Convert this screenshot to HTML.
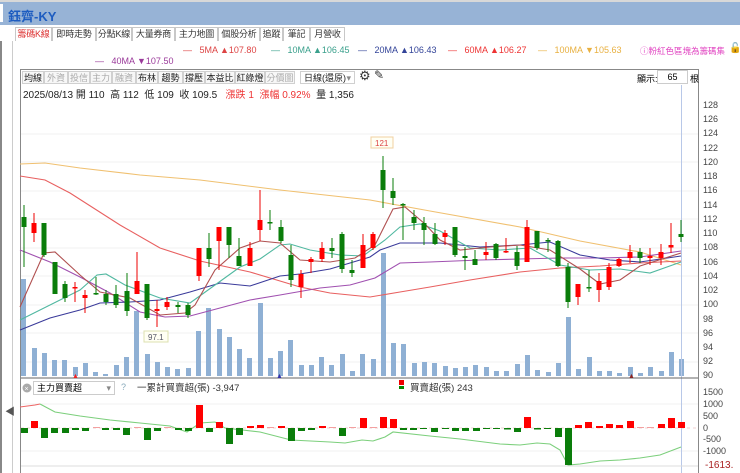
<!DOCTYPE html>
<html><head><meta charset="utf-8"><style>
*{margin:0;padding:0;box-sizing:border-box}
body{width:740px;height:473px;overflow:hidden;background:#fff;font-family:"Liberation Sans","Noto Sans CJK TC",sans-serif;position:relative}
.a{position:absolute;white-space:nowrap}
.tb{position:absolute;top:0;left:0;width:740px;height:25px;background:#97b3d6;border-top:2px solid #d8d8d8}
.tab{position:absolute;top:27px;height:14px;border:1px solid #c8c8c8;border-bottom:none;font-size:9px;line-height:13px;color:#333;text-align:center;background:#fff;white-space:nowrap;overflow:hidden;letter-spacing:-0.2px}
.btn{position:absolute;top:71px;height:13px;font-size:9px;line-height:12px;color:#222;border:1px solid #d0d0d0;text-align:center;background:#f7f7f7;white-space:nowrap;overflow:hidden}
.g{color:#aaa}
.ma{font-size:9px;top:45px}
.ax{position:absolute;left:703px;font-size:9px;color:#444}
</style></head><body>
<div class="tb"></div>
<div class="a" style="left:0;top:4px;width:3px;height:18px;background:#fff"></div>
<div class="a" style="left:8px;top:6px;font-size:13px;font-weight:bold;color:#1d5cc0">鈺齊-KY</div>
<div class="tab" style="left:15px;width:37px;color:#d33">籌碼K線</div>
<div class="tab" style="left:52px;width:44px">即時走勢</div>
<div class="tab" style="left:96px;width:36px">分點K線</div>
<div class="tab" style="left:132px;width:43px">大量券商</div>
<div class="tab" style="left:175px;width:43px">主力地圖</div>
<div class="tab" style="left:218px;width:42px">個股分析</div>
<div class="tab" style="left:260px;width:23px">追蹤</div>
<div class="tab" style="left:283px;width:27px">筆記</div>
<div class="tab" style="left:310px;width:35px">月營收</div>
<div class="a" style="left:12px;top:41px;width:1px;height:432px;background:#ccc"></div>
<div class="a" style="left:0;top:41px;width:2px;height:432px;background:#888"></div>
<div class="a" style="left:5px;top:403px;font-size:10px;color:#555">◀</div>

<div class="a ma" style="left:183px;color:#d44">—&nbsp;&nbsp; 5MA ▲107.80</div>
<div class="a ma" style="left:271px;color:#3aa08c">—&nbsp;&nbsp; 10MA ▲106.45</div>
<div class="a ma" style="left:358px;color:#334499">—&nbsp;&nbsp; 20MA ▲106.43</div>
<div class="a ma" style="left:448px;color:#e33">—&nbsp;&nbsp; 60MA ▲106.27</div>
<div class="a ma" style="left:538px;color:#e8b040">—&nbsp;&nbsp; 100MA <span style="color:#e8b040">▼</span>105.63</div>
<div class="a ma" style="left:640px;color:#e040c0;font-size:8.5px">ⓘ粉紅色區塊為籌碼集</div>
<div class="a" style="left:729px;top:43px;font-size:10px">🔓</div>
<div class="a ma" style="left:95px;top:56px;color:#9a3a9a">—&nbsp;&nbsp; 40MA ▼107.50</div>

<div class="a" style="left:20px;top:69px;width:679px;height:404px;border:1px solid #888;border-bottom:none"></div>
<div class="btn" style="left:22px;width:22px">均線</div>
<div class="btn g" style="left:44px;width:24px">外資</div>
<div class="btn g" style="left:68px;width:22px">投信</div>
<div class="btn g" style="left:90px;width:22px">主力</div>
<div class="btn g" style="left:112px;width:24px">融資</div>
<div class="btn" style="left:136px;width:22px">布林</div>
<div class="btn" style="left:158px;width:25px">趨勢</div>
<div class="btn" style="left:183px;width:22px">撐壓</div>
<div class="btn" style="left:205px;width:30px">本益比</div>
<div class="btn" style="left:235px;width:30px">紅綠燈</div>
<div class="btn g" style="left:265px;width:30px">分價圖</div>
<div class="btn" style="left:300px;width:55px;text-align:left;padding-left:3px;background:#fff">日線(還原)<span style="position:absolute;right:3px;color:#888">▾</span></div>
<div class="a" style="left:359px;top:68px;font-size:13px;color:#333">⚙</div>
<div class="a" style="left:374px;top:68px;font-size:12px;color:#333">✎</div>
<div class="a" style="left:637px;top:72px;font-size:9px">顯示:</div>
<div class="a" style="left:657px;top:70px;width:31px;height:14px;border:1px solid #ccc;font-size:9px;text-align:center;line-height:12px">65</div>
<div class="a" style="left:690px;top:72px;font-size:9px">根</div>
<div class="a" style="left:23px;top:86px;font-size:10px;color:#222">2025/08/13 開 110&nbsp; 高 112&nbsp; 低 109&nbsp; 收 109.5 &nbsp;&nbsp;<span style="color:#e33">漲跌 1&nbsp; 漲幅 0.92%</span>&nbsp; 量 1,356</div>

<svg class="a" style="left:0;top:0" width="740" height="473" viewBox="0 0 740 473">
<g stroke="#f2f2f2" stroke-width="1">
<line x1="21" y1="134" x2="698" y2="134"/><line x1="21" y1="162" x2="698" y2="162"/><line x1="21" y1="191" x2="698" y2="191"/><line x1="21" y1="219" x2="698" y2="219"/><line x1="21" y1="248" x2="698" y2="248"/><line x1="21" y1="276" x2="698" y2="276"/><line x1="21" y1="305" x2="698" y2="305"/><line x1="21" y1="333" x2="698" y2="333"/><line x1="21" y1="362" x2="698" y2="362"/>
<line x1="21" y1="404" x2="698" y2="404"/><line x1="21" y1="451" x2="698" y2="451"/>
</g>
<g fill="#8fb0d4">
<rect x="21" y="279" width="5" height="97"/><rect x="32" y="348" width="5" height="28"/><rect x="42" y="353" width="5" height="23"/><rect x="52" y="360" width="5" height="16"/><rect x="62" y="360" width="5" height="16"/><rect x="73" y="367" width="5" height="9"/><rect x="83" y="363" width="5" height="13"/><rect x="93" y="372" width="5" height="4"/><rect x="103" y="374" width="5" height="2"/><rect x="114" y="365" width="5" height="11"/><rect x="124" y="357" width="5" height="19"/><rect x="134" y="311" width="5" height="65"/><rect x="145" y="354" width="5" height="22"/><rect x="155" y="362" width="5" height="14"/><rect x="165" y="367" width="5" height="9"/><rect x="175" y="369" width="5" height="7"/><rect x="186" y="368" width="5" height="8"/><rect x="196" y="331" width="5" height="45"/><rect x="206" y="308" width="5" height="68"/><rect x="217" y="329" width="5" height="47"/><rect x="227" y="337" width="5" height="39"/><rect x="237" y="349" width="5" height="27"/><rect x="247" y="358" width="5" height="18"/><rect x="258" y="303" width="5" height="73"/><rect x="268" y="358" width="5" height="18"/><rect x="278" y="351" width="5" height="25"/><rect x="288" y="340" width="5" height="36"/><rect x="299" y="365" width="5" height="11"/><rect x="309" y="365" width="5" height="11"/><rect x="319" y="357" width="5" height="19"/><rect x="329" y="365" width="5" height="11"/><rect x="340" y="354" width="5" height="22"/><rect x="350" y="371" width="5" height="5"/><rect x="360" y="354" width="5" height="22"/><rect x="371" y="359" width="5" height="17"/><rect x="381" y="253" width="5" height="123"/><rect x="391" y="343" width="5" height="33"/><rect x="401" y="344" width="5" height="32"/><rect x="412" y="363" width="5" height="13"/><rect x="422" y="362" width="5" height="14"/><rect x="432" y="363" width="5" height="13"/><rect x="443" y="366" width="5" height="10"/><rect x="453" y="368" width="5" height="8"/><rect x="463" y="367" width="5" height="9"/><rect x="473" y="365" width="5" height="11"/><rect x="484" y="367" width="5" height="9"/><rect x="494" y="371" width="5" height="5"/><rect x="504" y="371" width="5" height="5"/><rect x="515" y="364" width="5" height="12"/><rect x="525" y="355" width="5" height="21"/><rect x="535" y="370" width="5" height="6"/><rect x="546" y="372" width="5" height="4"/><rect x="556" y="363" width="5" height="13"/><rect x="566" y="317" width="5" height="59"/><rect x="576" y="369" width="5" height="7"/><rect x="587" y="357" width="5" height="19"/><rect x="597" y="371" width="5" height="5"/><rect x="607" y="371" width="5" height="5"/><rect x="617" y="373" width="5" height="3"/><rect x="628" y="367" width="5" height="9"/><rect x="638" y="373" width="5" height="3"/><rect x="648" y="367" width="5" height="9"/><rect x="659" y="371" width="5" height="5"/><rect x="669" y="352" width="5" height="24"/><rect x="679" y="359" width="5" height="17"/>
</g>
<line x1="681.5" y1="85" x2="681.5" y2="473" stroke="#b8c8e8" stroke-width="1"/>
<g fill="none" stroke-width="1.1">
<polyline stroke="#f0c070" points="20,164 45,163 80,168 140,175 200,180 280,190 370,200 430,211 520,227 580,241 640,252 681,265"/>
<polyline stroke="#e86060" points="20,176 45,180 70,193 120,225 160,248 200,261 250,272 300,287 330,293 370,297 400,292 430,287 470,280 520,272 560,268 600,266 640,263 681,261"/>
<polyline stroke="#a050b0" points="20,250 50,262 80,277 110,293 140,312 165,317 190,316 220,308 250,300 280,295 320,288 350,285 375,278 400,263 430,262 480,260 520,259 560,258 600,258 640,257 681,251"/>
<polyline stroke="#3a3a9a" points="20,330 50,318 80,310 100,303 130,302 160,300 190,292 220,283 250,286 280,276 300,274 330,269 350,263 370,257 380,250 400,243 440,243 480,247 520,245 550,242 580,255 610,260 640,262 681,256"/>
<polyline stroke="#50b8a0" points="20,320 50,305 80,290 97,275 106,274 125,285 160,298 190,303 215,285 240,267 260,259 280,245 290,244 310,250 340,255 363,256 385,240 400,227 420,224 440,231 470,248 500,250 530,248 560,265 590,270 620,269 650,273 681,262"/>
<polyline stroke="#b05050" points="20,307 44,253 55,252 80,275 100,292 130,298 160,315 185,313 195,305 215,270 240,248 260,241 280,243 300,260 330,262 355,258 375,245 393,209 405,207 425,224 440,240 460,250 490,247 520,245 550,250 580,269 600,284 620,280 640,266 681,253"/>
</g>
<g stroke-width="1">
<g stroke="#0a7d0a">
<line x1="24" y1="205" x2="24" y2="267"/><line x1="44" y1="223" x2="44" y2="257"/><line x1="55" y1="262" x2="55" y2="294"/><line x1="65" y1="281" x2="65" y2="302"/><line x1="96" y1="277" x2="96" y2="295"/><line x1="106" y1="290" x2="106" y2="305"/><line x1="116" y1="285" x2="116" y2="308"/><line x1="127" y1="273" x2="127" y2="316"/><line x1="147" y1="284" x2="147" y2="320"/><line x1="178" y1="302" x2="178" y2="313"/><line x1="188" y1="303" x2="188" y2="318"/><line x1="209" y1="233" x2="209" y2="267"/><line x1="229" y1="227" x2="229" y2="258"/><line x1="239" y1="238" x2="239" y2="266"/><line x1="270" y1="210" x2="270" y2="230"/><line x1="281" y1="220" x2="281" y2="243"/><line x1="291" y1="245" x2="291" y2="287"/><line x1="332" y1="238" x2="332" y2="258"/><line x1="342" y1="232" x2="342" y2="273"/><line x1="352" y1="260" x2="352" y2="277"/>
<line x1="383" y1="156" x2="383" y2="208"/><line x1="393" y1="178" x2="393" y2="205"/><line x1="403" y1="203" x2="403" y2="240"/><line x1="414" y1="210" x2="414" y2="230"/><line x1="424" y1="217" x2="424" y2="245"/><line x1="435" y1="223" x2="435" y2="245"/><line x1="455" y1="227" x2="455" y2="257"/><line x1="465" y1="247" x2="465" y2="270"/><line x1="475" y1="250" x2="475" y2="265"/><line x1="496" y1="243" x2="496" y2="260"/><line x1="517" y1="246" x2="517" y2="270"/><line x1="537" y1="231" x2="537" y2="250"/><line x1="548" y1="238" x2="548" y2="252"/><line x1="558" y1="240" x2="558" y2="267"/><line x1="568" y1="263" x2="568" y2="308"/><line x1="589" y1="270" x2="589" y2="292"/><line x1="640" y1="248" x2="640" y2="263"/><line x1="681" y1="220" x2="681" y2="242"/>
</g>
<g stroke="#e00">
<line x1="34" y1="213" x2="34" y2="242"/><line x1="75" y1="282" x2="75" y2="302"/><line x1="85" y1="290" x2="85" y2="313"/><line x1="137" y1="252" x2="137" y2="294"/><line x1="157" y1="300" x2="157" y2="327"/><line x1="167" y1="297" x2="167" y2="310"/><line x1="199" y1="248" x2="199" y2="281"/><line x1="219" y1="227" x2="219" y2="270"/><line x1="250" y1="242" x2="250" y2="266"/><line x1="260" y1="190" x2="260" y2="241"/><line x1="301" y1="270" x2="301" y2="298"/><line x1="311" y1="257" x2="311" y2="273"/><line x1="322" y1="242" x2="322" y2="262"/><line x1="363" y1="234" x2="363" y2="268"/>
<line x1="373" y1="232" x2="373" y2="250"/><line x1="445" y1="230" x2="445" y2="245"/><line x1="486" y1="242" x2="486" y2="260"/><line x1="506" y1="238" x2="506" y2="253"/><line x1="527" y1="220" x2="527" y2="262"/><line x1="578" y1="284" x2="578" y2="305"/><line x1="599" y1="273" x2="599" y2="302"/><line x1="609" y1="263" x2="609" y2="290"/><line x1="619" y1="258" x2="619" y2="267"/><line x1="630" y1="245" x2="630" y2="263"/><line x1="650" y1="248" x2="650" y2="265"/><line x1="661" y1="244" x2="661" y2="265"/><line x1="671" y1="223" x2="671" y2="253"/>
</g>
<g fill="#0a7d0a">
<rect x="21.5" y="217" width="5" height="10"/><rect x="41.5" y="223" width="5" height="32"/><rect x="52.5" y="262" width="5" height="32"/><rect x="62.5" y="284" width="5" height="14"/><rect x="93.5" y="293" width="5" height="1.5"/><rect x="103.5" y="294" width="5" height="8"/><rect x="113.5" y="294" width="5" height="11"/><rect x="124.5" y="291" width="5" height="20"/><rect x="144.5" y="284" width="5" height="34"/><rect x="175.5" y="305" width="5" height="2"/><rect x="185.5" y="305" width="5" height="10"/><rect x="206.5" y="248" width="5" height="11"/><rect x="226.5" y="227" width="5" height="18"/><rect x="236.5" y="256" width="5" height="10"/><rect x="267.5" y="222" width="5" height="1.5"/><rect x="278.5" y="227" width="5" height="14"/><rect x="288.5" y="255" width="5" height="25"/><rect x="329.5" y="248" width="5" height="3"/><rect x="339.5" y="234" width="5" height="35"/><rect x="349.5" y="270" width="5" height="3"/>
<rect x="380.5" y="170" width="5" height="20"/><rect x="390.5" y="191" width="5" height="7"/><rect x="400.5" y="204" width="5" height="1.5"/><rect x="411.5" y="217" width="5" height="6"/><rect x="421.5" y="223" width="5" height="7"/><rect x="432.5" y="234" width="5" height="10"/><rect x="452.5" y="227" width="5" height="28"/><rect x="462.5" y="256" width="5" height="2"/><rect x="472.5" y="259" width="5" height="6"/><rect x="493.5" y="244" width="5" height="14"/><rect x="514.5" y="252" width="5" height="14"/><rect x="534.5" y="231" width="5" height="17"/><rect x="545.5" y="240" width="5" height="1.5"/><rect x="555.5" y="241" width="5" height="25"/><rect x="565.5" y="267" width="5" height="35"/><rect x="586.5" y="287" width="5" height="1.5"/><rect x="637.5" y="252" width="5" height="6"/><rect x="678.5" y="234" width="5" height="3"/>
</g>
<g fill="#f00">
<rect x="31.5" y="223" width="5" height="10"/><rect x="72.5" y="287" width="5" height="1.5"/><rect x="82.5" y="295" width="5" height="3"/><rect x="134.5" y="281" width="5" height="13"/><rect x="154.5" y="309" width="5" height="2"/><rect x="164.5" y="302" width="5" height="5"/><rect x="196.5" y="248" width="5" height="28"/><rect x="216.5" y="227" width="5" height="14"/><rect x="247.5" y="248" width="5" height="18"/><rect x="257.5" y="220" width="5" height="10"/><rect x="298.5" y="274" width="5" height="13"/><rect x="308.5" y="259" width="5" height="3"/><rect x="319.5" y="248" width="5" height="11"/><rect x="360.5" y="245" width="5" height="23"/>
<rect x="370.5" y="234" width="5" height="14"/><rect x="442.5" y="233" width="5" height="4"/><rect x="483.5" y="252" width="5" height="3"/><rect x="503.5" y="251" width="5" height="1.5"/><rect x="524.5" y="227" width="5" height="35"/><rect x="575.5" y="284" width="5" height="13"/><rect x="596.5" y="281" width="5" height="9"/><rect x="606.5" y="267" width="5" height="20"/><rect x="616.5" y="259" width="5" height="7"/><rect x="627.5" y="252" width="5" height="6"/><rect x="647.5" y="256" width="5" height="2"/><rect x="658.5" y="252" width="5" height="6"/><rect x="668.5" y="245" width="5" height="2.5"/>
</g>
</g>
<g font-size="8" font-family="Liberation Sans,sans-serif">
<rect x="144" y="331" width="24" height="11" fill="#fffff4" stroke="#dde0b0"/><text x="148" y="340" fill="#556">97.1</text>
<rect x="371" y="137" width="22" height="11" fill="#fffff4" stroke="#f0d0a0"/><text x="375" y="146" fill="#d44">121</text>
</g>
<line x1="21" y1="378" x2="698" y2="378" stroke="#666"/>
<g fill="#e22"><text x="72" y="378" font-size="7">▲</text><text x="276" y="378" font-size="7" fill="#33a">▲</text><text x="628" y="378" font-size="7" fill="#822">▲</text></g>
<line x1="21" y1="428" x2="698" y2="428" stroke="#f0d0d0" stroke-dasharray="3,3"/>
<polyline fill="none" stroke="#e66" stroke-width="1.1" points="20,407 35,405 40,404"/>
<polyline fill="none" stroke="#7ccf7c" stroke-width="1.1" points="40,404 55,412 80,416 110,420 140,423 170,426 187,432 200,423 215,422 225,428 260,432 291,440 330,442 345,443 362,440 373,441 385,437 393,432 430,436 460,439 500,444 520,445 537,443 550,444 560,450 568,465 580,464 600,461 620,460 640,458 660,455 681,447"/>
<g fill="#0a7d0a">
<rect x="21" y="428" width="7" height="5"/><rect x="41" y="428" width="7" height="10"/><rect x="51" y="428" width="7" height="5"/><rect x="62" y="428" width="7" height="5"/><rect x="72" y="428" width="7" height="2"/><rect x="82" y="428" width="7" height="3"/><rect x="102" y="428" width="7" height="2"/><rect x="113" y="428" width="7" height="2"/><rect x="123" y="428" width="7" height="7"/><rect x="144" y="428" width="7" height="12"/><rect x="154" y="428" width="7" height="3"/><rect x="175" y="428" width="7" height="2"/><rect x="185" y="428" width="7" height="3"/><rect x="206" y="428" width="7" height="4"/><rect x="226" y="428" width="7" height="16"/><rect x="236" y="428" width="7" height="7"/><rect x="288" y="428" width="7" height="13"/><rect x="298" y="428" width="7" height="3"/><rect x="308" y="428" width="7" height="2"/><rect x="339" y="428" width="7" height="8"/>
<rect x="400" y="428" width="7" height="2"/><rect x="410" y="428" width="7" height="2"/><rect x="420" y="428" width="7" height="1"/><rect x="431" y="428" width="7" height="4"/><rect x="442" y="428" width="7" height="1"/><rect x="452" y="428" width="7" height="3"/><rect x="462" y="428" width="7" height="3"/><rect x="473" y="428" width="7" height="3"/><rect x="483" y="428" width="7" height="1"/><rect x="493" y="428" width="7" height="1"/><rect x="504" y="428" width="7" height="1.5"/><rect x="514" y="428" width="7" height="4"/><rect x="534" y="428" width="7" height="1.5"/><rect x="544" y="428" width="7" height="1"/><rect x="555" y="428" width="7" height="9"/><rect x="565" y="428" width="7" height="37"/>
</g>
<g fill="#f00">
<rect x="31" y="421" width="7" height="7"/><rect x="196" y="405" width="7" height="23"/><rect x="216" y="422" width="7" height="6"/><rect x="247" y="426" width="7" height="2"/><rect x="257" y="425" width="7" height="3"/><rect x="278" y="426" width="7" height="2"/><rect x="319" y="426" width="7" height="2"/><rect x="360" y="418" width="7" height="10"/><rect x="380" y="417" width="7" height="11"/><rect x="390" y="419" width="7" height="9"/><rect x="524" y="417" width="7" height="11"/><rect x="575" y="425" width="7" height="3"/><rect x="585" y="422" width="7" height="6"/><rect x="596" y="426" width="7" height="2"/><rect x="606" y="424" width="7" height="4"/><rect x="616" y="425" width="7" height="3"/><rect x="627" y="421" width="7" height="7"/><rect x="658" y="424" width="7" height="4"/><rect x="668" y="418" width="7" height="10"/><rect x="678" y="422" width="7" height="6"/>
</g>
<g fill="#f3a0a0"><rect x="93" y="427" width="7" height="1"/><rect x="134" y="427" width="7" height="1"/><rect x="164" y="427" width="7" height="1"/><rect x="267" y="427" width="7" height="1"/><rect x="329" y="427" width="7" height="1"/><rect x="349" y="427" width="7" height="1"/><rect x="370" y="427" width="7" height="1"/><rect x="637" y="427" width="7" height="1"/><rect x="647" y="427" width="7" height="1"/></g>
<line x1="21" y1="466" x2="698" y2="466" stroke="#ddd"/>
<circle cx="27" cy="388" r="4.5" fill="#aaa"/><text x="24.5" y="391" font-size="7" fill="#fff">×</text>
</svg>
<div class="a" style="left:33px;top:381px;width:82px;height:14px;border:1px solid #ccc;font-size:9px;line-height:12px;padding-left:3px;background:#fff">主力買賣超<span style="position:absolute;right:3px;color:#888">▾</span></div>
<div class="a" style="left:121px;top:382px;font-size:9px;color:#8ab">?</div>
<div class="a" style="left:137px;top:380px;font-size:9.5px;color:#333">一累計買賣超(張) -3,947</div>
<div class="a" style="left:399px;top:380px;width:5px;height:5px;background:#e00"></div>
<div class="a" style="left:399px;top:386px;width:5px;height:3px;background:#080"></div>
<div class="a" style="left:410px;top:380px;font-size:9.5px;color:#333">買賣超(張) 243</div>

<div class="ax" style="top:100px">128</div><div class="ax" style="top:114px">126</div><div class="ax" style="top:128px">124</div><div class="ax" style="top:143px">122</div><div class="ax" style="top:157px">120</div><div class="ax" style="top:171px">118</div><div class="ax" style="top:185px">116</div><div class="ax" style="top:200px">114</div><div class="ax" style="top:214px">112</div><div class="ax" style="top:228px">110</div><div class="ax" style="top:242px">108</div><div class="ax" style="top:257px">106</div><div class="ax" style="top:271px">104</div><div class="ax" style="top:285px">102</div><div class="ax" style="top:299px">100</div><div class="ax" style="top:314px">98</div><div class="ax" style="top:328px">96</div><div class="ax" style="top:342px">94</div><div class="ax" style="top:356px">92</div><div class="ax" style="top:370px">90</div>
<div class="ax" style="top:387px">1500</div><div class="ax" style="top:399px">1000</div><div class="ax" style="top:411px">500</div><div class="ax" style="top:423px">0</div><div class="ax" style="top:434px">-500</div><div class="ax" style="top:446px">-1000</div>
<div class="ax" style="top:460px;color:#a22;font-size:10px;left:705px">-1613.</div>
</body></html>
